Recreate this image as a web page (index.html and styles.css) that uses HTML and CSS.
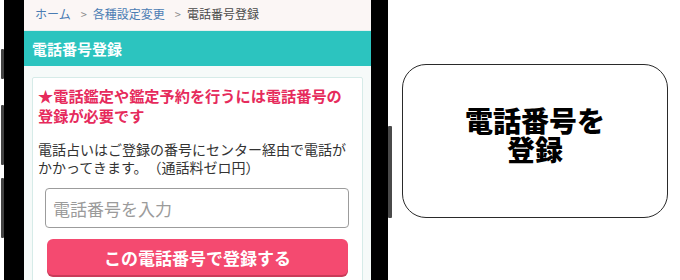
FILE: index.html
```html
<!DOCTYPE html>
<html lang="ja">
<head>
<meta charset="utf-8">
<link rel="stylesheet" href="styles.css">
</head>
<body>
<div class="stage">
  <div class="phone">
    <span class="btn btn-l1"></span>
    <span class="btn btn-l2"></span>
    <span class="btn btn-l3"></span>
    <span class="btn btn-r1"></span>
    <div class="screen">
      <nav class="crumbs">
        <a class="crumb-link">ホーム</a><span class="sep">&gt;</span><a class="crumb-link">各種設定変更</a><span class="sep">&gt;</span><span class="crumb-current">電話番号登録</span>
      </nav>
      <h1 class="title">電話番号登録</h1>
      <div class="content">
        <div class="card">
          <p class="alert">★電話鑑定や鑑定予約を行うには電話番号の登録が必要です</p>
          <p class="desc">電話占いはご登録の番号にセンター経由で電話がかかってきます。（通話料ゼロ円）</p>
          <div class="form">
            <input class="tel" type="text" placeholder="電話番号を入力">
            <button class="submit">この電話番号で登録する</button>
          </div>
        </div>
      </div>
    </div>
  </div>
  <div class="side">
    <div class="callout"><span class="callout-line">電話番号を</span><span class="callout-line">登録</span></div>
  </div>
</div>
</body>
</html>
```
FILE: styles.css
```css
* { box-sizing: border-box; }
html, body { margin: 0; padding: 0; background: #fff; }
body {
  font-family: "Noto Sans CJK JP", "Noto Sans", sans-serif;
  width: 680px;
  height: 280px;
  overflow: hidden;
  text-spacing-trim: space-all;
}
.stage {
  display: flex;
  height: 280px;
}
.phone {
  position: relative;
  margin-left: 4px;
  width: 384px;
  height: 280px;
  background: #000;
  padding: 0 17px 0 20px;
  flex: none;
}
.btn {
  position: absolute;
  width: 3px;
  background: #444;
  border-radius: 1px;
}
.btn-l1 { left: -3px; top: 49px; height: 30px; }
.btn-l2 { left: -3px; top: 105px; height: 60px; }
.btn-l3 { left: -3px; top: 178px; height: 60px; }
.btn-r1 { right: -4px; top: 126px; height: 92px; width: 4px; background: #4a4a4a; }
.screen {
  width: 347px;
  height: 280px;
  overflow: hidden;
  background: #f6faf9;
}
.crumbs {
  height: 31px;
  background: #fbf6f5;
  padding: 4px 0 0 11px;
  font-size: 12px;
  line-height: 20px;
  white-space: nowrap;
  border-bottom: 1px solid #e6efee;
}
.crumb-link { color: #4a7cb3; }
.sep { color: #8a8a8a; margin: 0 6px 0 10px; font-size: 11px; }
.crumb-current { color: #4a4a4a; }
.title {
  margin: 0;
  height: 35px;
  background: #2cc4bf;
  color: #fff;
  font-size: 15px;
  font-weight: 700;
  line-height: 35px;
  padding-left: 8px;
}
.content {
  padding: 11px 8px 0 8px;
}
.card {
  background: #fff;
  border: 1px solid #d6ebe8;
  border-radius: 2px;
  padding: 7px 5px 20px 5px;
}
.alert {
  margin: 0 10px 0 0;
  color: #e62b5c;
  font-size: 15.2px;
  font-weight: 700;
  line-height: 20px;
}
.desc {
  margin: 15px 0 0 0;
  color: #333;
  font-size: 14px;
  line-height: 18px;
}
.form {
  margin-top: 12px;
  padding: 0 8px 0 7px;
}
.tel {
  display: block;
  width: 304px;
  height: 40px;
  border: 1px solid #9c9c9c;
  border-radius: 4px;
  padding: 0 0 0 7px;
  font-family: inherit;
  font-size: 17px;
  color: #333;
  background: #fff;
  outline: none;
}
.tel::placeholder { color: #9b9b9b; }
.submit {
  display: block;
  margin: 11px 0 0 2px;
  width: 301px;
  height: 36px;
  border: none;
  border-radius: 6px;
  background: #f44a70;
  box-shadow: 0 2px 0 #c93b59;
  color: #fff;
  font-family: inherit;
  font-size: 17px;
  font-weight: 700;
  padding: 0;
}
.side {
  flex: 1;
  padding: 64px 0 0 14px;
}
.callout {
  width: 266px;
  height: 154px;
  border: 1.5px solid #2a2a2a;
  border-radius: 24px;
  display: flex;
  flex-direction: column;
  align-items: center;
  justify-content: center;
  text-align: center;
  font-size: 28px;
  font-weight: 900;
  color: #000;
  padding-bottom: 12px;
}
.callout-line {
  display: block;
  height: 29px;
  line-height: 29px;
}
```
